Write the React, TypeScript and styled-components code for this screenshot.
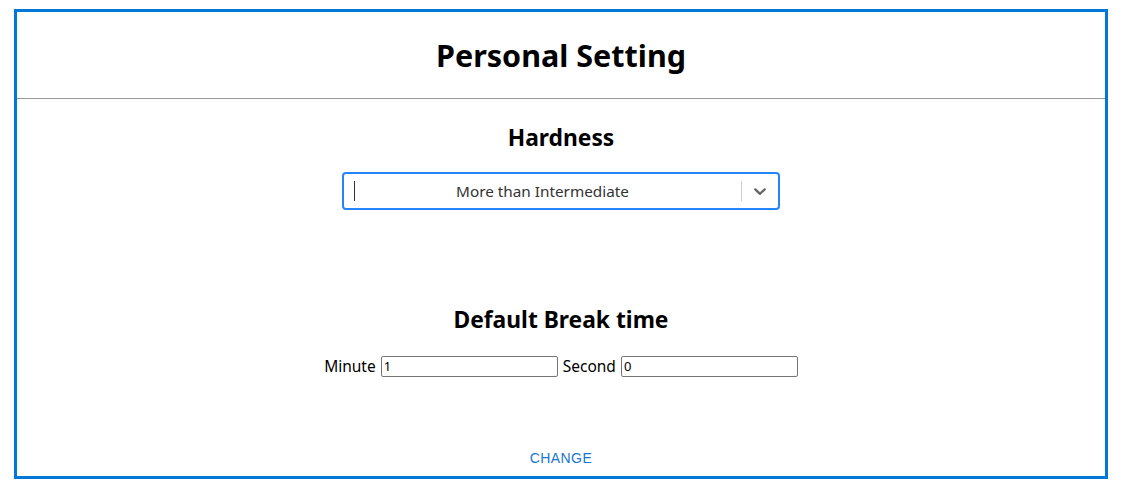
import React from "react";
import styled, { createGlobalStyle } from "styled-components";

const Global = createGlobalStyle`
  html, body { margin: 0; padding: 0; background: #fff; }
  body { font-family: "Noto Sans", "Noto Sans CJK KR", sans-serif; color: #000; }
`;

const Frame = styled.div`
  box-sizing: border-box;
  margin: 9px 19px 0 14px;
  height: 470px;
  border: 3px solid #0078d7;
  display: flex;
  flex-direction: column;
  align-items: stretch;
`;

const Header = styled.header`
  height: 86px;
  border-bottom: 1px solid #999;
  display: flex;
  align-items: center;
  justify-content: center;
`;

const Title = styled.h1`
  margin: 0;
  font-size: 30.5px;
  font-weight: 700;
  line-height: 40px;
`;

const Body = styled.main`
  flex: 1;
  display: flex;
  flex-direction: column;
  align-items: center;
`;

const SectionTitle = styled.h2<{ $top: number }>`
  margin: ${(p) => p.$top}px 0 0;
  font-size: 22.8px;
  font-weight: 700;
  line-height: 30px;
`;

const Control = styled.div`
  box-sizing: border-box;
  margin-top: 19px;
  width: 438px;
  height: 38px;
  border: 2px solid #2684ff;
  border-radius: 4px;
  display: flex;
  align-items: center;
`;

const ValueArea = styled.div`
  flex: 1;
  position: relative;
  height: 100%;
  display: flex;
  align-items: center;
  justify-content: center;
  font-size: 15.3px;
  color: #333;
`;

const Caret = styled.span`
  position: absolute;
  left: 10px;
  top: 7px;
  width: 1px;
  height: 20px;
  background: #333;
`;

const Separator = styled.span`
  align-self: stretch;
  width: 1px;
  margin: 7px 0;
  background: #ccc;
`;

const Indicator = styled.div`
  padding: 0 8px;
  display: flex;
  align-items: center;
  color: #666;
`;

const Row = styled.div`
  margin-top: 19px;
  display: flex;
  align-items: center;
  gap: 5px;
  font-size: 15.5px;
`;

const Label = styled.label`
  line-height: 24px;
`;

const Field = styled.input`
  box-sizing: border-box;
  width: 177px;
  height: 21px;
  border: 1px solid #767676;
  border-radius: 2px;
  padding: 1px 2px;
  font-family: "Noto Sans", sans-serif;
  font-size: 13px;
  color: #000;
  outline: none;
`;

const ChangeButton = styled.button`
  margin-top: auto;
  border: 0;
  background: transparent;
  padding: 6px 8px;
  height: 36px;
  font-family: "Liberation Sans", Arial, sans-serif;
  font-size: 14px;
  font-weight: 400;
  letter-spacing: 0.4px;
  color: #1976d2;
  text-transform: uppercase;
  cursor: pointer;
`;

export default function App() {
  return (
    <>
      <Global />
      <Frame>
        <Header>
          <Title>Personal Setting</Title>
        </Header>
        <Body>
          <SectionTitle $top={24}>Hardness</SectionTitle>
          <Control>
            <ValueArea>
              <Caret />
              More than Intermediate
            </ValueArea>
            <Separator />
            <Indicator>
              <svg width="20" height="20" viewBox="0 0 20 20" fill="currentColor">
                <path d="M4.516 7.548c0.436-0.446 1.043-0.481 1.576 0l3.908 3.747 3.908-3.747c0.533-0.481 1.141-0.446 1.574 0 0.436 0.445 0.408 1.197 0 1.615-0.406 0.418-4.695 4.502-4.695 4.502-0.217 0.223-0.502 0.335-0.787 0.335s-0.57-0.112-0.789-0.335c0 0-4.287-4.084-4.695-4.502s-0.436-1.17 0-1.615z" />
              </svg>
            </Indicator>
          </Control>
          <SectionTitle $top={95}>Default Break time</SectionTitle>
          <Row>
            <Label>Minute</Label>
            <Field defaultValue="1" />
            <Label>Second</Label>
            <Field defaultValue="0" />
          </Row>
          <ChangeButton>Change</ChangeButton>
        </Body>
      </Frame>
    </>
  );
}
